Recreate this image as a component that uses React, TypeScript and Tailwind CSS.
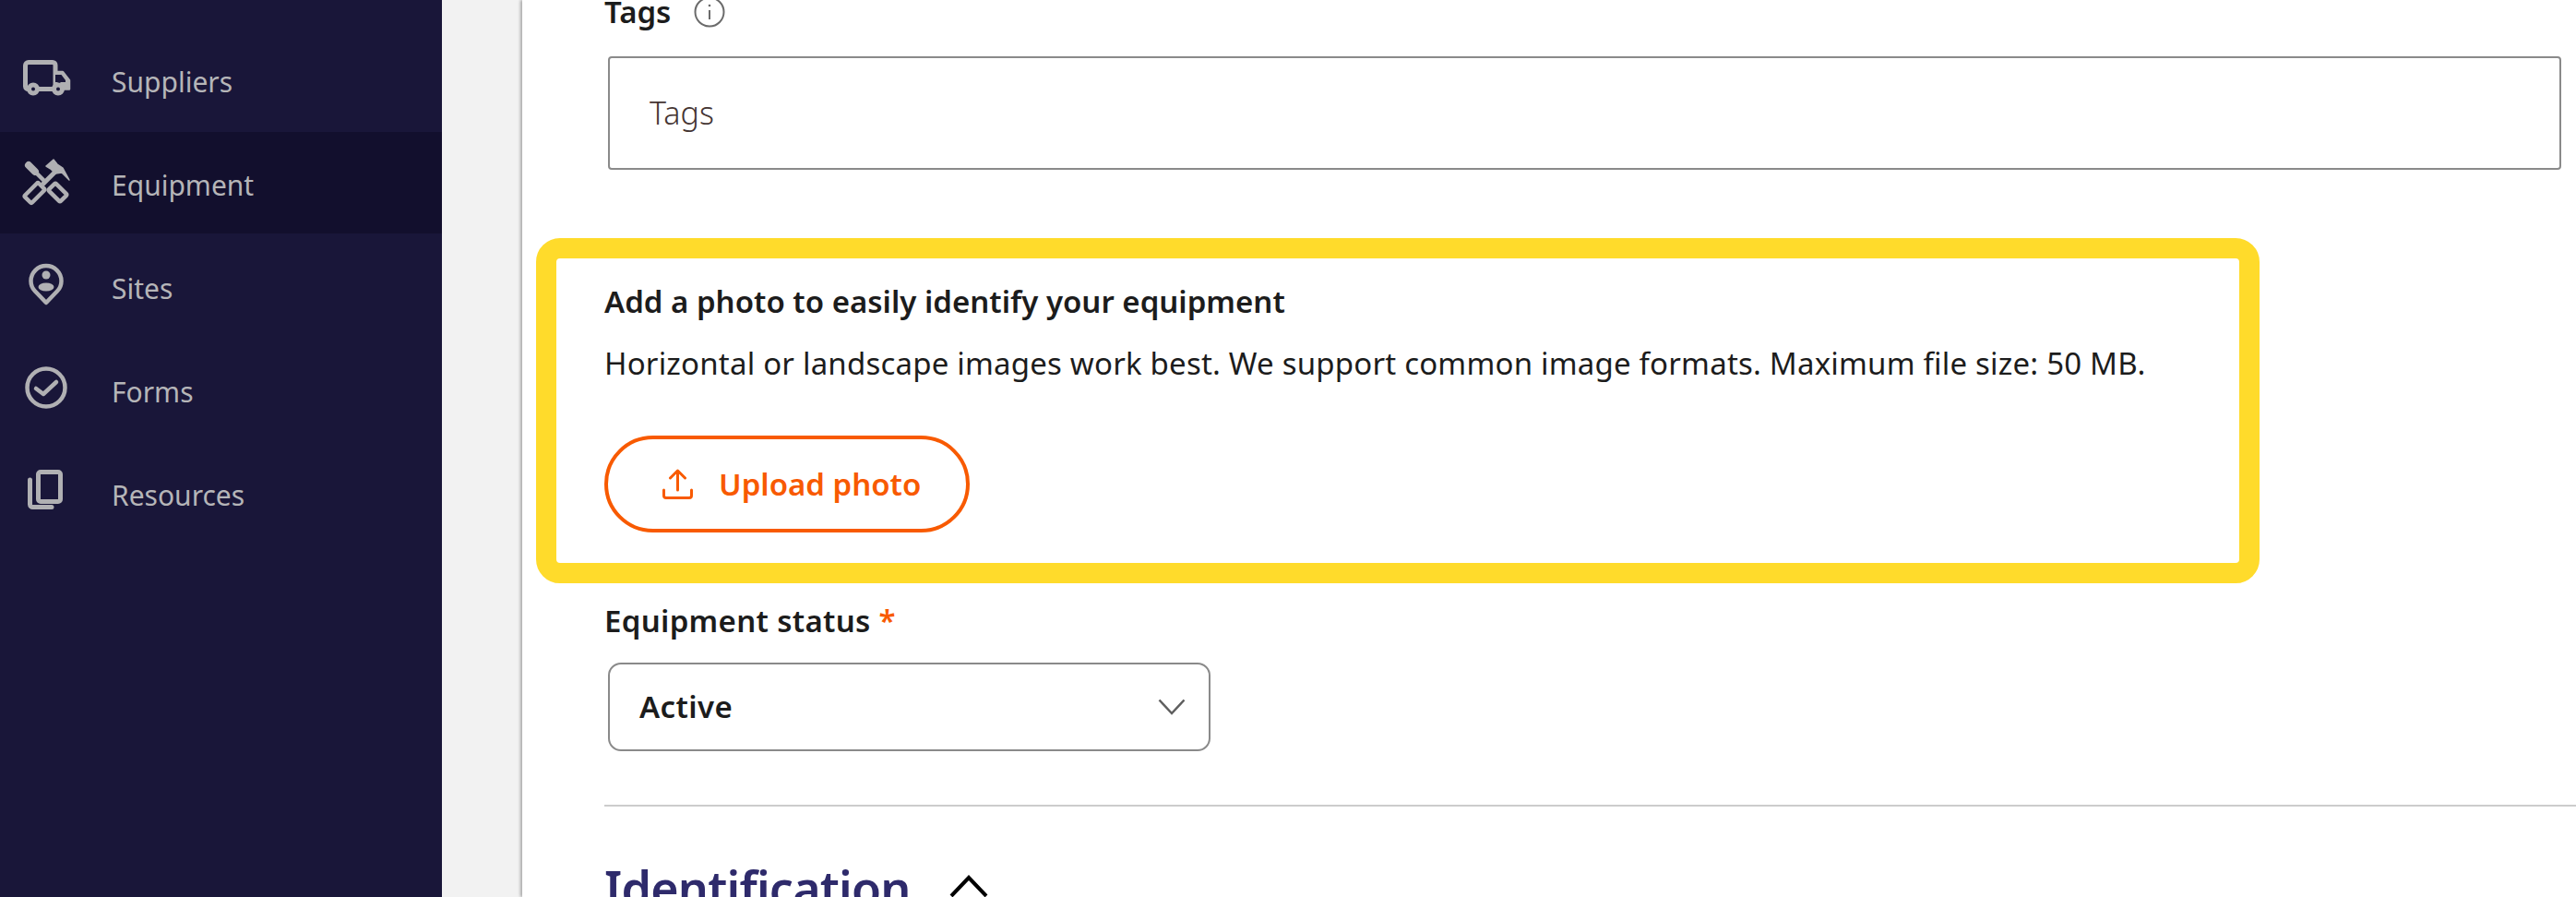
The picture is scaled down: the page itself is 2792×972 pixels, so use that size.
import React from "react";

const ic = "w-[60px] h-[60px] shrink-0 mb-[4px]";

function Truck() {
  return (
    <svg viewBox="0 0 60 60" className={ic} fill="none" stroke="#b0b0b3" strokeWidth="5" strokeLinejoin="round">
      <path d="M11 42.500H10.500a3 3 0 0 1-3-3V17a3.500 3.500 0 0 1 3.500-3.500H37a3 3 0 0 1 3 3V42.500H21" />
      <path d="M41 24H48L55 33V42.500H48" fill="#b0b0b3" strokeWidth="2.500" />
      <path d="M40 27H46.500L51 33V35H40Z" fill="#191639" stroke="none" />
      <circle cx="16" cy="42.500" r="4.500" fill="#191639" />
      <circle cx="43" cy="42.500" r="4.500" fill="#191639" />
    </svg>
  );
}

function Tools() {
  return (
    <svg viewBox="0 0 60 60" className={ic} fill="none" stroke="#b0b0b3" strokeLinejoin="round">
      <path d="M11 13L18 20" strokeWidth="8" strokeLinecap="round" />
      <path d="M18 20L30 32" strokeWidth="4.500" />
      <g transform="rotate(45 42.500 42.500)">
        <rect x="33.500" y="37" width="18" height="11" rx="1.500" strokeWidth="4.500" />
      </g>
      <g transform="rotate(-45 17.500 43)">
        <rect x="7" y="37.500" width="21" height="11" rx="1.500" strokeWidth="4.500" />
      </g>
      <path d="M26 34L41 19" strokeWidth="5" />
      <path d="M30 14L38 7L42 12L48 16L55 29L47 21L40 22L35 17Z" fill="#b0b0b3" stroke="#b0b0b3" strokeWidth="1.500" />
    </svg>
  );
}

function Pin() {
  return (
    <svg viewBox="0 0 60 60" className={ic} fill="none" stroke="#b0b0b3" strokeWidth="4.500" strokeLinejoin="round">
      <path d="M30 50L18 37.500C14.500 34 13.500 30.500 13.500 26.500A16.500 16.500 0 0 1 46.500 26.500C46.500 30.500 45.500 34 42 37.500Z" />
      <circle cx="30" cy="20" r="4.500" fill="#b0b0b3" stroke="none" />
      <ellipse cx="30" cy="33" rx="8.500" ry="4.500" fill="#b0b0b3" stroke="none" />
    </svg>
  );
}

function Check() {
  return (
    <svg viewBox="0 0 60 60" className={ic} fill="none" stroke="#b0b0b3" strokeWidth="4.500" strokeLinecap="round" strokeLinejoin="round">
      <circle cx="30" cy="30" r="20.500" />
      <path d="M19 31L27 37L41 24" strokeWidth="4.500" />
    </svg>
  );
}

function Copy() {
  return (
    <svg viewBox="0 0 60 60" className={ic} fill="none" stroke="#b0b0b3" strokeWidth="5" strokeLinecap="round" strokeLinejoin="round">
      <rect x="21.500" y="9.500" width="24" height="32" rx="2.500" />
      <path d="M12.500 18V44.500a3 3 0 0 0 3 3H36" />
    </svg>
  );
}

const nav = [
  { label: "Suppliers", Icon: Truck, active: false },
  { label: "Equipment", Icon: Tools, active: true },
  { label: "Sites", Icon: Pin, active: false },
  { label: "Forms", Icon: Check, active: false },
  { label: "Resources", Icon: Copy, active: false },
];

const font = "font-['Noto_Sans',sans-serif]";

export default function App() {
  return (
    <div className={`flex w-[2792px] h-[972px] overflow-hidden bg-white ${font}`}>
      <aside className="w-[479px] shrink-0 bg-[#191639] pt-[31px] flex flex-col gap-[2px]">
        {nav.map(({ label, Icon, active }) => (
          <div key={label} className={`h-[110px] flex items-center pl-[20px] gap-[41px] ${active ? "bg-[#120f2d]" : ""}`}>
            <Icon />
            <span className="mt-[6px] text-[30px] leading-[40px] text-[#b5b5b8]">{label}</span>
          </div>
        ))}
      </aside>
      <div className="w-[87px] shrink-0 bg-[#f2f2f2]" />
      <main className="flex-1 bg-white pl-[89px] shadow-[-2px_0_3px_rgba(0,0,0,0.3)] overflow-hidden">
        <div className="-mt-[7px]">
          <div className="flex items-center h-[40px]">
            <span className="text-[33px] leading-[40px] font-semibold text-[#1c1c1c]">Tags</span>
            <svg viewBox="0 0 34 34" className="ml-[25px] w-[34px] h-[34px]" fill="none" stroke="#6b6b6b">
              <circle cx="17" cy="17" r="15.500" strokeWidth="2" />
              <path d="M17 15V25" strokeWidth="2" />
              <circle cx="17" cy="10" r="1.300" fill="#6b6b6b" stroke="none" />
            </svg>
          </div>
          <div className="mt-[28px] ml-[4px] w-[2117px] h-[123px] border-2 border-[#8a8a8a] rounded-[4px] flex items-center pl-[43px]">
            <span className="text-[34px] font-light text-[#453533]">Tags</span>
          </div>
          <section className="mt-[74px] -ml-[74px] w-[1868px] border-[22px] border-[#ffdb2b] rounded-[26px] pl-[52px] pt-[27px] pb-[33px]">
            <h3 className="text-[33px] leading-[40px] font-semibold text-[#1c1c1c]">Add a photo to easily identify your equipment</h3>
            <p className="mt-[27px] text-[33px] leading-[40px] tracking-[0.2px] text-[#1c1c1c]">Horizontal or landscape images work best. We support common image formats. Maximum file size: 50 MB.</p>
            <button className="mt-[58px] w-[396px] h-[105px] rounded-full border-[4px] border-[#f85a00] flex items-center pl-[59px] gap-[28px] text-[#f85a00]">
              <svg viewBox="0 0 33 33" className="w-[33px] h-[33px] shrink-0" fill="none" stroke="#f85a00" strokeWidth="3" strokeLinecap="round" strokeLinejoin="round">
                <path d="M16.500 23V2M8.500 10L16.500 2L24.500 10" />
                <path d="M1.500 23V29a2.500 2.500 0 0 0 2.500 2.500H29a2.500 2.500 0 0 0 2.500-2.500V23" />
              </svg>
              <span className="text-[33px] leading-[40px] font-semibold">Upload photo</span>
            </button>
          </section>
          <div className="mt-[21px] h-[40px] text-[33px] leading-[40px] font-semibold tracking-[0.3px] text-[#1c1c1c]">
            Equipment status <span className="text-[#f85a00]">*</span>
          </div>
          <div className="mt-[25px] ml-[4px] w-[653px] h-[96px] border-2 border-[#8a8a8a] rounded-[14px] flex items-center justify-between pl-[32px] pr-[25px]">
            <span className="text-[33px] leading-[40px] font-semibold tracking-[0.4px] text-[#1c1c1c]">Active</span>
            <svg viewBox="0 0 30 18" className="w-[30px] h-[18px]" fill="none" stroke="#5f5f5f" strokeWidth="2.500">
              <path d="M1.500 1.500L15 16L28.500 1.500" />
            </svg>
          </div>
          <hr className="mt-[58px] border-0 h-[2px] bg-[#cccccc]" />
          <div className="mt-[56px] flex items-start">
            <h2 className="text-[52px] leading-[64px] font-semibold tracking-[-0.8px] text-[#2e2a6b]">Identification</h2>
            <svg viewBox="0 0 42 24" className="ml-[42px] mt-[18px] w-[42px] h-[24px]" fill="none" stroke="#000000" strokeWidth="4">
              <path d="M2 23L21 3L40 23" />
            </svg>
          </div>
        </div>
      </main>
    </div>
  );
}
